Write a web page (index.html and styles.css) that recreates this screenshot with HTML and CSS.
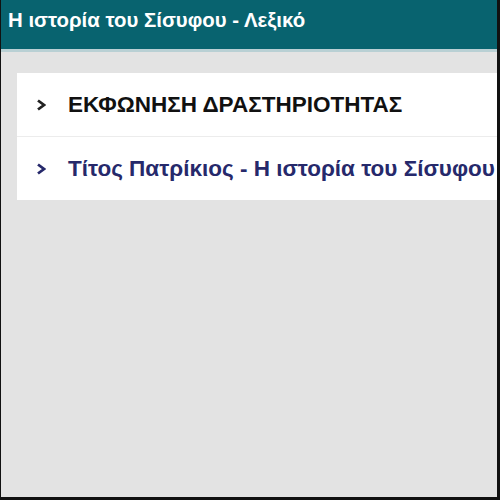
FILE: index.html
```html
<!DOCTYPE html>
<html lang="el">
<head>
  <meta charset="UTF-8" />
  <meta name="viewport" content="width=device-width, initial-scale=1.0" />
  <title>Η ιστορία του Σίσυφου - Λεξικό</title>
  <link rel="stylesheet" href="styles.css">
</head>
<body>
  <div class="frame">
    <header class="topbar">Η ιστορία του Σίσυφου - Λεξικό</header>

    <div class="content">
      <div class="accordion">
        <div class="item">
          <svg class="chev" width="10" height="12" viewBox="0 0 10 12"><polyline points="2,1.5 8,6 2,10.5" /></svg>
          <span class="label">ΕΚΦΩΝΗΣΗ ΔΡΑΣΤΗΡΙΟΤΗΤΑΣ</span>
        </div>
        <div class="item link">
          <svg class="chev" width="10" height="12" viewBox="0 0 10 12"><polyline points="2,1.5 8,6 2,10.5" /></svg>
          <span class="label">Τίτος Πατρίκιος - Η ιστορία του Σίσυφου</span>
        </div>
      </div>
    </div>
  </div>
</body>
</html>
```

FILE: styles.css
```css
html, body { margin: 0; padding: 0; }
body { font-family: "Liberation Sans", Arial, sans-serif; background: #e3e3e3; }

.frame { width: 500px; height: 500px; box-sizing: border-box; border: 3px solid #111; border-top: 0; border-left-width: 1px; background: #e3e3e3; overflow: hidden; }

.topbar { height: 52px; box-sizing: border-box; padding: 9px 0 0 7px; background: #08636f; color: #fff; font-weight: bold; font-size: 20.4px; border-bottom: 3px solid #b9d0d4; }

.content { padding: 21px 0 0 16px; }
.accordion { background: #fff; margin-right: -4px; }

.item { display: flex; align-items: center; height: 63px; padding-left: 19px; white-space: nowrap; overflow: hidden; font-weight: bold; font-size: 22.5px; color: #111; }
.item + .item { border-top: 1px solid #ececec; }
.item.link { color: #26296b; }

.chev { flex: none; margin-right: 22px; fill: none; stroke: #222; stroke-width: 2.8; }
.item.link .chev { stroke: #26296b; }
```
